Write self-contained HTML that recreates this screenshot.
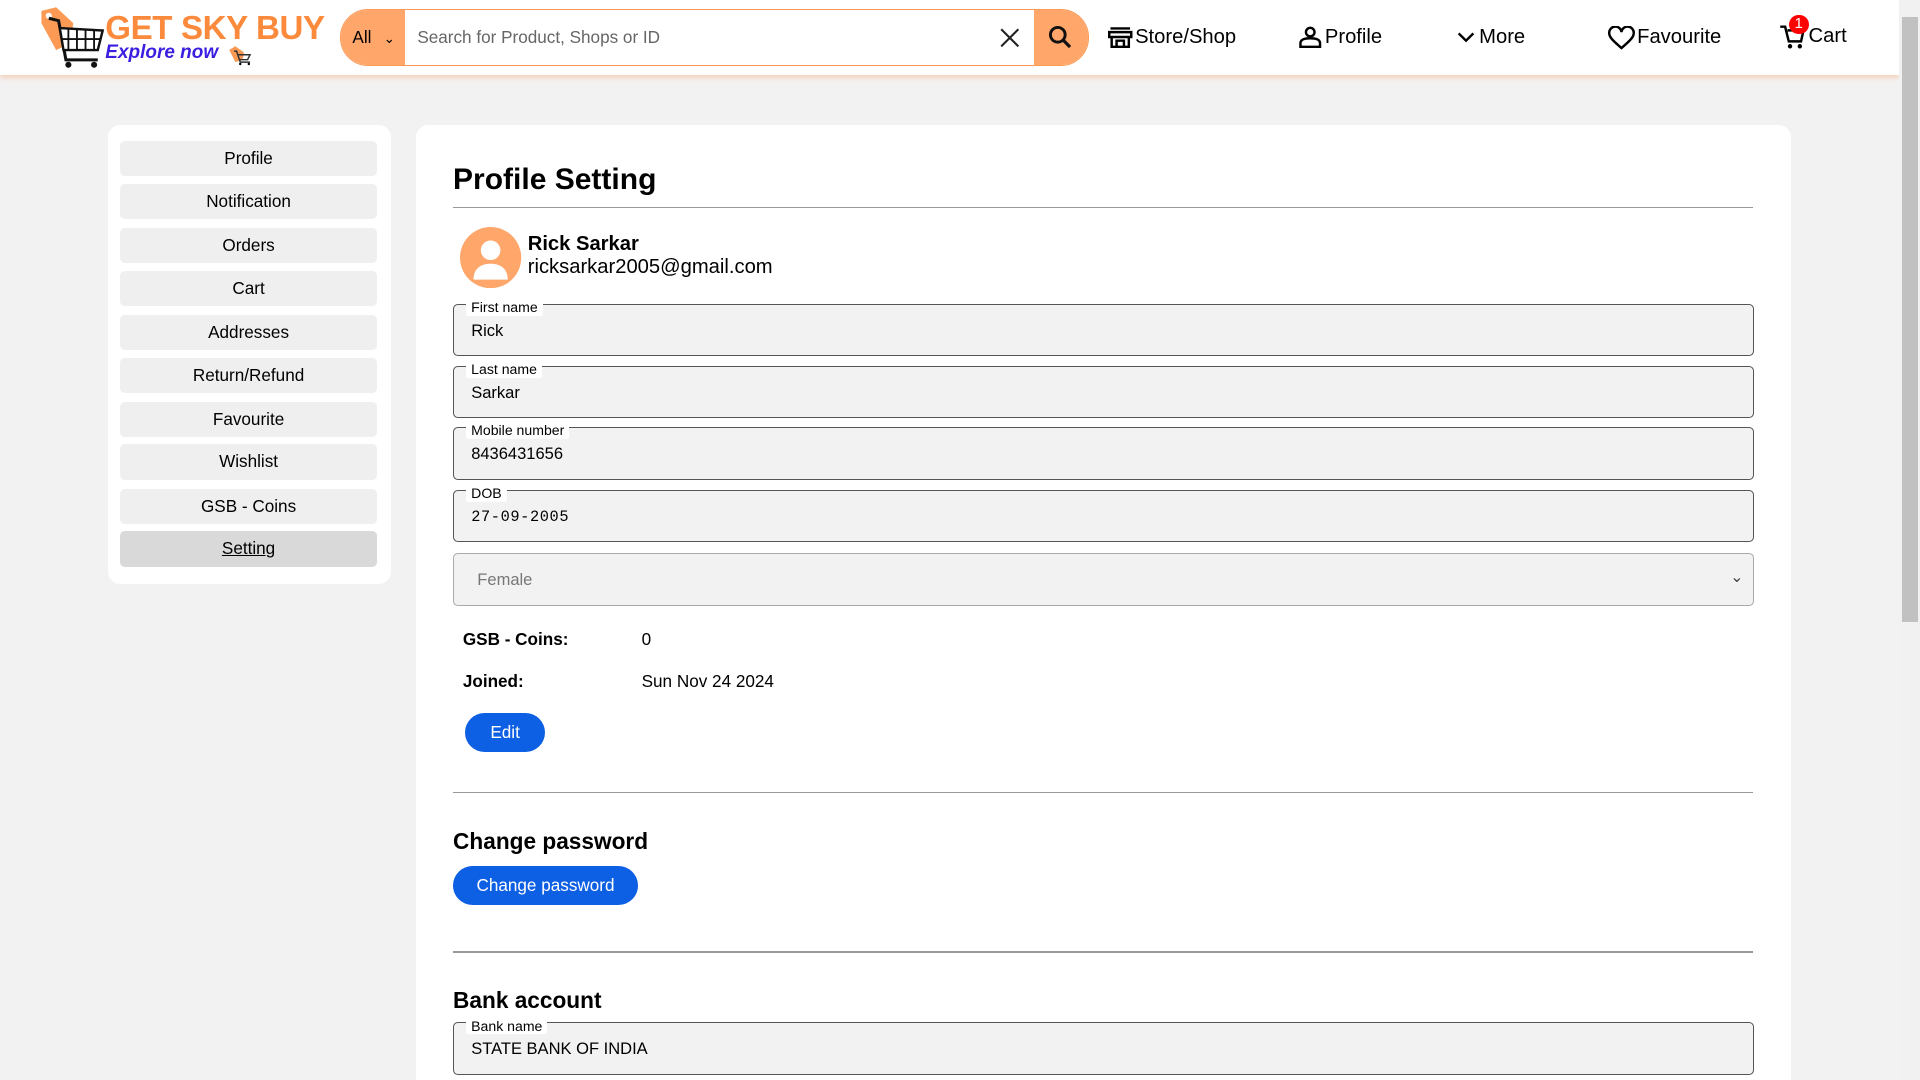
<!DOCTYPE html>
<html><head><meta charset="utf-8"><style>
html,body{margin:0;padding:0;width:1920px;height:1080px;overflow:hidden;background:#f2f2f2}
#w{zoom:1.22449;width:1568px;height:882px;position:relative;font-family:"Liberation Sans",Arial,sans-serif;color:#000;overflow:hidden}
.a{position:absolute}
.hdr{left:0;top:0;width:1551px;height:61px;background:#fff;box-shadow:0 2px 4px rgba(255,140,70,.35)}
.sb{left:1551px;top:0;width:17px;height:882px;background:#f1f1f1}
.nav{font-size:16.5px;top:20px;display:flex;align-items:center;gap:2px}
.side{left:88px;top:102px;width:231px;height:375px;background:#fff;border-radius:10px}
.btn{position:absolute;left:10px;width:210px;height:29px;background:#efefef;border-radius:4px;font-size:14px;text-align:center;line-height:29px}
.main{left:340px;top:102px;width:1123px;height:800px;background:#fff;border-radius:10px}
.fs{position:absolute;left:30px;width:1061px;height:41px;border:1px solid #555;border-radius:4px;background:#f2f2f2}
.fs .lg{position:absolute;left:10px;top:-4px;font-size:11.5px;background:#fff;padding:0 4px;line-height:13px;border-radius:2px}
.fs .v{position:absolute;left:14px;top:13px;font-size:13.5px}
.hr{position:absolute;left:30px;width:1062px;height:1px;background:#999}
.pb{position:absolute;background:#0d5fe3;color:#fff;font-size:14px;text-align:center;border-radius:17px}
</style></head><body><div id="w">
<div class="a hdr"></div>
<div class="a sb"><div style="position:absolute;left:2px;top:14px;width:13px;height:494px;background:#c1c1c1"></div></div>
<svg class="a" style="left:32px;top:5px" width="54" height="52" viewBox="0 0 54 52">
<path d="M2 4 L14 1 L28 14 L26 30 L14 36 L2 14Z" fill="#fb9a55"/>
<circle cx="8" cy="8" r="2.5" fill="#fff"/>
<path d="M8 10 L16 12 L22 44 L48 44" fill="none" stroke="#111" stroke-width="2.5"/>
<path d="M17 18 L52 20 L48 36 L20 36Z" fill="#fff" stroke="#111" stroke-width="2"/>
<path d="M24 19v17M31 19v17M38 20v16M45 20v16M18 27h32" stroke="#111" stroke-width="1.5"/>
<circle cx="24" cy="48" r="2.5" fill="#111"/><circle cx="45" cy="48" r="2.5" fill="#111"/>
</svg>
<div class="a" style="left:86px;top:8px;font-size:27px;font-weight:bold;color:#fb8a3c;letter-spacing:-0.3px">GET SKY BUY</div>
<div class="a" style="left:86px;top:34px;font-size:15.5px;font-weight:bold;font-style:italic;color:#3a1fe0">Explore now</div>
<svg class="a" style="left:186px;top:37px" width="20" height="17"><path d="M1 4L6 1l7 5-1 6-6 2z" fill="#fb9a55"/><path d="M5 5h2l3 9h8M8 8h10l-2 4h-7" fill="none" stroke="#333" stroke-width="1.2"/><circle cx="10" cy="15.5" r="1"/><circle cx="17" cy="15.5" r="1"/></svg>
<div class="a" style="left:278px;top:7px;width:610px;height:45px;border:1px solid #fb9a55;border-radius:23px;background:#fff;overflow:hidden">
<div class="a" style="left:0;top:0;width:52px;height:45px;background:#ffa66b;font-size:14px;line-height:45px;padding-left:9px;box-sizing:border-box">All <span style="font-size:11px;margin-left:6px">&#8964;</span></div>
<div class="a" style="left:62px;top:14px;font-size:14px;color:#666">Search for Product, Shops or ID</div>
<svg class="a" style="left:538px;top:15px" width="16" height="16"><path d="M1 1L15 15M15 1L1 15" stroke="#222" stroke-width="1.7"/></svg>
<div class="a" style="left:566px;top:0;width:45px;height:45px;background:#ffa66b"></div>
<svg class="a" style="left:577px;top:13px" width="20" height="20"><circle cx="8" cy="8" r="6" fill="none" stroke="#111" stroke-width="2.4"/><path d="M12.5 12.5L18 18" stroke="#111" stroke-width="2.6"/></svg>
</div>
<div class="a nav" style="left:905px;top:21px"><svg width="20" height="18"><path d="M2 2h16M1 5h18v4H1zM3 9v8h14V9M7 17v-5h6v5" fill="none" stroke="#000" stroke-width="2"/></svg>Store/Shop</div>
<div class="a nav" style="left:1060px;top:21px"><svg width="20" height="18"><circle cx="10" cy="5" r="3.5" fill="none" stroke="#000" stroke-width="2"/><path d="M2 17v-3c0-3 4-4 8-4s8 1 8 4v3z" fill="none" stroke="#000" stroke-width="2"/></svg>Profile</div>
<div class="a nav" style="left:1188px;top:21px"><svg width="18" height="18"><path d="M3 6l6 6 6-6" fill="none" stroke="#000" stroke-width="2"/></svg>More</div>
<div class="a nav" style="left:1313px;top:21px"><svg width="22" height="20"><path d="M11 18C4 12 1 9 1 6a5 5 0 0 1 10-1 5 5 0 0 1 10 1c0 3-3 6-10 12z" fill="none" stroke="#000" stroke-width="2"/></svg>Favourite</div>
<div class="a nav" style="left:1453px;top:19px"><svg width="22" height="22"><path d="M1 3h4l3 12h10l2-9H7" fill="none" stroke="#000" stroke-width="2"/><circle cx="9" cy="19" r="1.8"/><circle cx="17" cy="19" r="1.8"/></svg>Cart</div>
<div class="a" style="left:1461px;top:12px;width:16px;height:16px;border-radius:50%;background:#f00;color:#fff;font-size:12px;text-align:center;line-height:16px">1</div>
<div class="a side">
<div class="btn" style="top:13px">Profile</div>
<div class="btn" style="top:48px">Notification</div>
<div class="btn" style="top:84px">Orders</div>
<div class="btn" style="top:119px">Cart</div>
<div class="btn" style="top:155px">Addresses</div>
<div class="btn" style="top:190px">Return/Refund</div>
<div class="btn" style="top:226px">Favourite</div>
<div class="btn" style="top:261px">Wishlist</div>
<div class="btn" style="top:297px">GSB - Coins</div>
<div class="btn" style="top:332px;background:#d9d9d9;text-decoration:underline">Setting</div>
</div>
<div class="a main">
<div class="a" style="left:30px;top:31px;font-size:24.5px;font-weight:bold">Profile Setting</div>
<div class="hr" style="top:67px"></div>
<svg class="a" style="left:36px;top:83px" width="50" height="50"><circle cx="25" cy="25" r="25" fill="#ffa66b"/><circle cx="25" cy="19" r="8" fill="#fff"/><path d="M11 43c0-9 6-13 14-13s14 4 14 13z" fill="#fff"/></svg>
<div class="a" style="left:91px;top:88px;font-size:16.5px;font-weight:bold">Rick Sarkar</div>
<div class="a" style="left:91px;top:107px;font-size:16.5px">ricksarkar2005@gmail.com</div>
<div class="fs" style="top:146px"><span class="lg">First name</span><span class="v">Rick</span></div>
<div class="fs" style="top:197px"><span class="lg">Last name</span><span class="v">Sarkar</span></div>
<div class="fs" style="top:247px"><span class="lg">Mobile number</span><span class="v">8436431656</span></div>
<div class="fs" style="top:298px"><span class="lg">DOB</span><span class="v" style="font-family:'Liberation Mono',monospace;font-size:12.5px;top:14px;letter-spacing:0.5px">27-09-2005</span></div>
<div class="fs" style="top:350px;border-color:#aaa"><span class="v" style="color:#777;left:19px">Female</span><span class="a" style="right:8px;top:10px;font-size:13px;color:#444">&#8964;</span></div>
<div class="a" style="left:38px;top:412px;font-size:14px;font-weight:bold">GSB - Coins:</div>
<div class="a" style="left:184px;top:412px;font-size:14px">0</div>
<div class="a" style="left:38px;top:446px;font-size:14px;font-weight:bold">Joined:</div>
<div class="a" style="left:184px;top:446px;font-size:14px">Sun Nov 24 2024</div>
<div class="pb" style="left:40px;top:480px;width:65px;height:32px;line-height:32px">Edit</div>
<div class="hr" style="top:545px"></div>
<div class="a" style="left:30px;top:574px;font-size:18.5px;font-weight:bold">Change password</div>
<div class="pb" style="left:30px;top:605px;width:151px;height:32px;line-height:32px">Change password</div>
<div class="hr" style="top:675px"></div>
<div class="a" style="left:30px;top:704px;font-size:18.5px;font-weight:bold">Bank account</div>
<div class="fs" style="top:733px"><span class="lg">Bank name</span><span class="v">STATE BANK OF INDIA</span></div>
</div>
</div></body></html>
